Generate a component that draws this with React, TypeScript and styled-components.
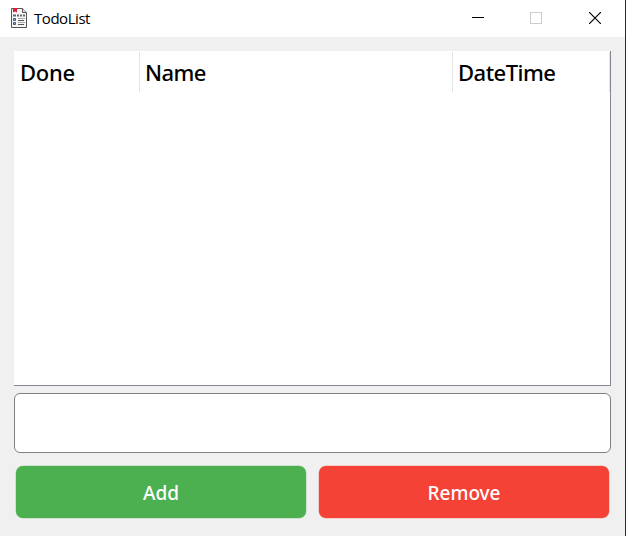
import React from "react";
import styled, { createGlobalStyle } from "styled-components";

const GlobalStyle = createGlobalStyle`
  html, body, #root { margin: 0; height: 100%; }
  body { overflow: hidden; font-family: "Noto Sans", "Open Sans", sans-serif; }
  *, *::before, *::after { box-sizing: border-box; }
`;

const Window = styled.div`
  display: flex;
  flex-direction: column;
  width: 626px;
  height: 536px;
  background: #f0f0f0;
  border-right: 1px solid #2b2b2b;
`;

const TitleBar = styled.header`
  display: flex;
  align-items: center;
  flex: 0 0 37px;
  padding: 0 0 1px 10px;
  background: #fff;
`;

const Title = styled.span`
  flex: 1;
  margin-left: 6px;
  font-family: "Open Sans", sans-serif;
  font-size: 15px;
  line-height: 20px;
  letter-spacing: -0.45px;
  color: #000;
`;

const WindowButton = styled.button<{ $width?: number }>`
  display: flex;
  align-items: center;
  justify-content: center;
  width: ${(p) => p.$width ?? 58}px;
  height: 36px;
  padding: 0;
  border: 0;
  background: none;
`;

const Content = styled.main`
  display: flex;
  flex-direction: column;
  padding: 14px 14px 0 14px;
`;

const Table = styled.section`
  height: 335px;
  background: #fff;
  border-right: 1px solid #828790;
  border-bottom: 1px solid #828790;
`;

const HeaderRow = styled.div`
  display: grid;
  grid-template-columns: 126px 313px 157px;
  height: 41px;
  padding-top: 1px;
`;

const HeaderCell = styled.div<{ $spacing: number; $inset: number }>`
  height: 40px;
  padding-left: ${(p) => p.$inset}px;
  border-right: 1px solid #e4e4e4;
  font-size: 22px;
  font-weight: 500;
  line-height: 40px;
  letter-spacing: ${(p) => p.$spacing}px;
  color: #000;
  white-space: nowrap;
`;

const TaskInput = styled.input`
  width: 597px;
  height: 60px;
  margin-top: 7px;
  padding: 0 10px;
  border: 1px solid #808080;
  border-radius: 6px;
  outline: 0;
  background: #fff;
  font: 500 20px "Noto Sans", sans-serif;
`;

const Actions = styled.div`
  display: grid;
  grid-template-columns: 290px 290px;
  gap: 13px;
  padding: 13px 0 0 2px;
`;

const ActionButton = styled.button<{ $color: string }>`
  height: 52px;
  padding: 2px 0 0 0;
  border: 0;
  border-radius: 7px;
  background: ${(p) => p.$color};
  box-shadow: 0 0 0 0.5px ${(p) => p.$color}66;
  color: #fff;
  font: 500 19px/50px "Noto Sans", sans-serif;
`;

const DocumentIcon = () => (
  <svg width="18" height="20" viewBox="0 0 18 20" fill="none">
    <path d="M1.5.5h11l4 4v15h-15z" fill="#f7f7f7" stroke="#555" />
    <path d="M12.5.5v4h4" fill="#ddd" stroke="#555" />
    <path d="M3 0h4v4.5L5 3.5 3 4.5z" fill="#d51f38" />
    <path d="M3 7.5h3M7 7.5h2M10 7.5h2M13 7.5h2" stroke="#666" strokeWidth="2" />
    <path d="M3.5 10.5h2v2h-2zM3.5 14.5h2v2h-2z" fill="#8ba8c4" stroke="#3f5f80" />
    <path d="M8 10.5h7M8 14.5h7" stroke="#aaa" />
    <path d="M8 12.5h6M8 16.5h6" stroke="#555" />
  </svg>
);

const columns = [
  { label: "Done", spacing: -0.25, inset: 6 },
  { label: "Name", spacing: -0.55, inset: 5 },
  { label: "DateTime", spacing: -0.5, inset: 5 },
];

export default function App() {
  return (
    <>
      <GlobalStyle />
      <Window>
        <TitleBar>
          <DocumentIcon />
          <Title>TodoList</Title>
          <WindowButton aria-label="Minimize">
            <svg width="12" height="12" shapeRendering="crispEdges">
              <path d="M0 5.5h12" stroke="#000" />
            </svg>
          </WindowButton>
          <WindowButton aria-label="Maximize" disabled>
            <svg width="12" height="12" fill="none" shapeRendering="crispEdges">
              <path d="M.5.5h11v11H.5z" stroke="#ccc" />
            </svg>
          </WindowButton>
          <WindowButton aria-label="Close" $width={60}>
            <svg width="12" height="12" fill="none">
              <path d="M0 0l12 12M12 0L0 12" stroke="#000" strokeWidth="1.2" />
            </svg>
          </WindowButton>
        </TitleBar>
        <Content>
          <Table>
            <HeaderRow>
              {columns.map((c) => (
                <HeaderCell key={c.label} $spacing={c.spacing} $inset={c.inset}>
                  {c.label}
                </HeaderCell>
              ))}
            </HeaderRow>
          </Table>
          <TaskInput aria-label="Task" />
          <Actions>
            <ActionButton $color="#4caf50">Add</ActionButton>
            <ActionButton $color="#f44336">Remove</ActionButton>
          </Actions>
        </Content>
      </Window>
    </>
  );
}
